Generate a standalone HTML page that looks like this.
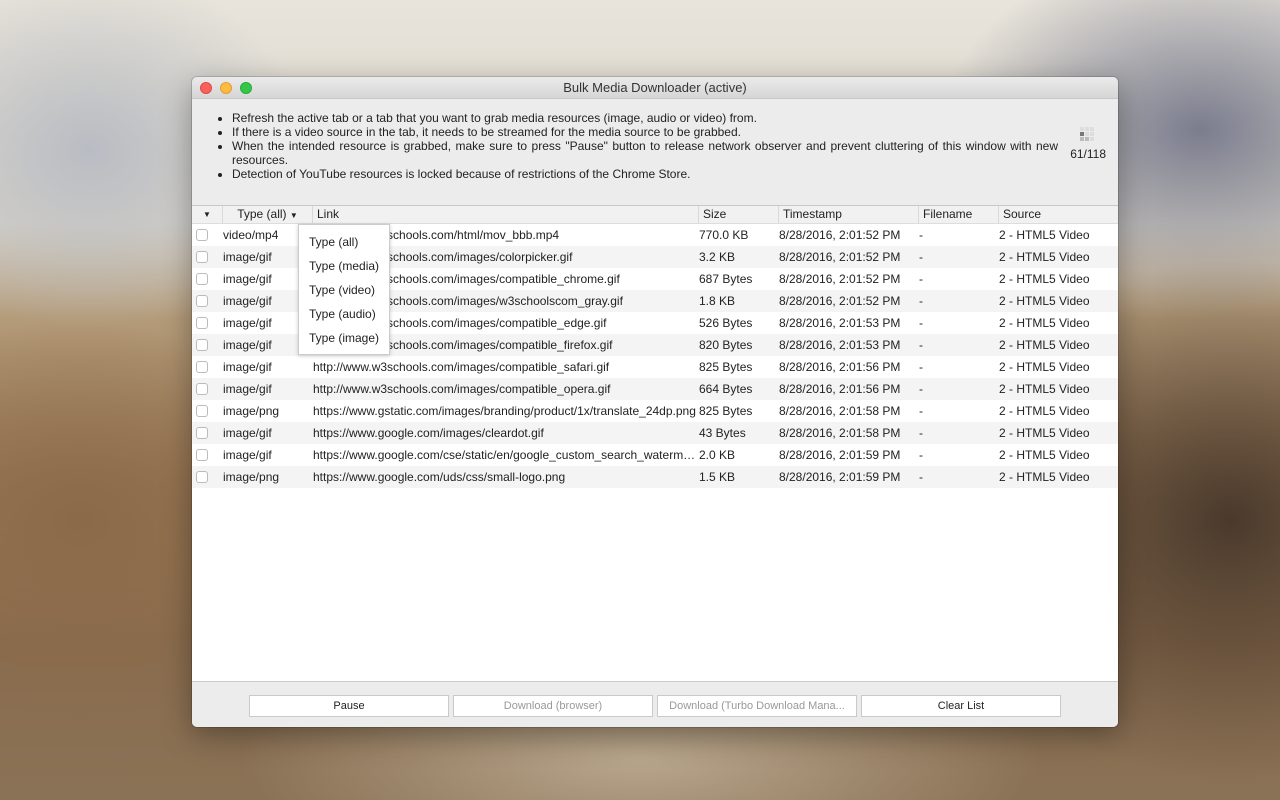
<!DOCTYPE html>
<html><head><meta charset="utf-8"><style>
*{margin:0;padding:0;box-sizing:border-box}
body{width:1280px;height:800px;overflow:hidden;position:relative;font-family:"Liberation Sans",Arial,sans-serif;font-size:12px;color:#222;
background:
radial-gradient(ellipse 260px 180px at 1200px 130px,#7b7d8e 0%,rgba(123,125,142,0) 100%),
radial-gradient(ellipse 300px 260px at 1230px 520px,#4a3a2c 0%,rgba(74,58,44,0) 100%),
radial-gradient(ellipse 260px 200px at 80px 520px,#8a6a48 0%,rgba(138,106,72,0) 100%),
radial-gradient(ellipse 220px 180px at 90px 150px,#b9bcc3 0%,rgba(185,188,195,0) 100%),
radial-gradient(ellipse 400px 120px at 640px 760px,#b8a68c 0%,rgba(184,166,140,0) 100%),
linear-gradient(180deg,#e8e4db 0%,#d9d4c8 28%,#b39a78 40%,#9c7a58 60%,#8a6c4e 80%,#8a7256 100%);}
.win{position:absolute;left:192px;top:77px;width:926px;height:650px;background:#ececec;border-radius:5px;overflow:hidden;box-shadow:0 8px 30px rgba(0,0,0,.35),0 0 0 1px rgba(0,0,0,.15)}
.title{height:22px;background:linear-gradient(#ebebeb,#d6d6d6);border-bottom:1px solid #c8c8c8;text-align:center;line-height:22px;font-size:13px;color:#333}
.dot{position:absolute;top:5px;width:12px;height:12px;border-radius:50%}
.info{position:absolute;left:0;top:23px;width:926px;height:105px}
.info ul{position:absolute;left:40px;top:11px;width:826px;line-height:14px;text-align:justify}
.cnt{position:absolute;right:12px;top:47px;font-size:12px}
.grid{position:absolute;left:888px;top:27px}
.grid i{position:absolute;width:4px;height:4px;background:#ddd}
.table{position:absolute;left:0;top:128px;width:926px;height:476px;background:#fff;border-top:1px solid #c8c8c8}
.hdr{height:18px;background:#f1f1f1;border-bottom:1px solid #ddd;position:relative}
.hdr span{position:absolute;top:0;line-height:17px;border-left:1px solid #d8d8d8;padding-left:4px;height:17px}
.row{height:22px;position:relative;line-height:23px}
.row:nth-child(even){background:#f4f4f4}
.row span{position:absolute;top:0;height:22px;white-space:nowrap;overflow:hidden}
.cb{position:absolute;left:4px;top:5px;width:12px;height:12px;border:1px solid #bbb;border-radius:3px;background:#fff}
.menu{position:absolute;left:298px;top:224px;width:92px;height:131px;background:#fff;border:1px solid #ccc;box-shadow:0 1px 4px rgba(0,0,0,.2)}
.menu div{position:absolute;left:10px;font-size:12px}
.foot{position:absolute;left:0;top:604px;width:926px;height:46px;border-top:1px solid #ccc;background:#ececec}
.btn{position:absolute;top:13px;width:200px;height:22px;background:#fff;border:1px solid #c9c9c9;text-align:center;line-height:20px;font-size:11px}
.dis{color:#999}
</style></head><body>
<div class="win">
 <div class="title">Bulk Media Downloader (active)</div>
 <div class="dot" style="left:8px;background:#fc605c;border:1px solid #df4744"></div>
 <div class="dot" style="left:28px;background:#fdbc40;border:1px solid #de9f34"></div>
 <div class="dot" style="left:48px;background:#34c84a;border:1px solid #27aa35"></div>
 <div class="info">
  <ul>
   <li>Refresh the active tab or a tab that you want to grab media resources (image, audio or video) from.</li>
   <li>If there is a video source in the tab, it needs to be streamed for the media source to be grabbed.</li>
   <li>When the intended resource is grabbed, make sure to press "Pause" button to release network observer and prevent cluttering of this window with new resources.</li>
   <li>Detection of YouTube resources is locked because of restrictions of the Chrome Store.</li>
  </ul>
  <div class="grid"><i style="left:0;top:0"></i><i style="left:5px;top:0"></i><i style="left:10px;top:0"></i><i style="left:0;top:5px;background:#777"></i><i style="left:5px;top:5px"></i><i style="left:10px;top:5px"></i><i style="left:0;top:10px;background:#bbb"></i><i style="left:5px;top:10px;background:#bbb"></i><i style="left:10px;top:10px"></i></div>
  <div class="cnt">61/118</div>
 </div>
 <div class="table">
  <div class="hdr">
   <span style="left:0;border:none;width:30px;text-align:center;padding:0;font-size:8px">&#9660;</span>
   <span style="left:30px;width:90px;text-align:center;padding:0">Type (all) <small style="font-size:8px">&#9660;</small></span>
   <span style="left:120px">Link</span>
   <span style="left:506px">Size</span>
   <span style="left:586px">Timestamp</span>
   <span style="left:726px">Filename</span>
   <span style="left:806px">Source</span>
  </div>
  <div id="rows"></div>
 </div>
 <div class="foot">
  <div class="btn" style="left:57px">Pause</div>
  <div class="btn dis" style="left:261px">Download (browser)</div>
  <div class="btn dis" style="left:465px">Download (Turbo Download Mana...</div>
  <div class="btn" style="left:669px">Clear List</div>
 </div>
</div>
<div class="menu">
 <div style="top:10px">Type (all)</div>
 <div style="top:34px">Type (media)</div>
 <div style="top:58px">Type (video)</div>
 <div style="top:82px">Type (audio)</div>
 <div style="top:106px">Type (image)</div>
</div>
<script>
var d=[["video/mp4","http://www.w3schools.com/html/mov_bbb.mp4","770.0 KB","2:01:52"],
["image/gif","http://www.w3schools.com/images/colorpicker.gif","3.2 KB","2:01:52"],
["image/gif","http://www.w3schools.com/images/compatible_chrome.gif","687 Bytes","2:01:52"],
["image/gif","http://www.w3schools.com/images/w3schoolscom_gray.gif","1.8 KB","2:01:52"],
["image/gif","http://www.w3schools.com/images/compatible_edge.gif","526 Bytes","2:01:53"],
["image/gif","http://www.w3schools.com/images/compatible_firefox.gif","820 Bytes","2:01:53"],
["image/gif","http://www.w3schools.com/images/compatible_safari.gif","825 Bytes","2:01:56"],
["image/gif","http://www.w3schools.com/images/compatible_opera.gif","664 Bytes","2:01:56"],
["image/png","https://www.gstatic.com/images/branding/product/1x/translate_24dp.png","825 Bytes","2:01:58"],
["image/gif","https://www.google.com/images/cleardot.gif","43 Bytes","2:01:58"],
["image/gif","https://www.google.com/cse/static/en/google_custom_search_waterm\u2026","2.0 KB","2:01:59"],
["image/png","https://www.google.com/uds/css/small-logo.png","1.5 KB","2:01:59"]];
var h="";d.forEach(function(r){h+='<div class="row"><div class="cb"></div><span style="left:31px">'+r[0]+'</span><span style="left:121px;width:383px">'+r[1]+'</span><span style="left:507px">'+r[2]+'</span><span style="left:587px">8/28/2016, '+r[3]+' PM</span><span style="left:727px">-</span><span style="left:807px">2 - HTML5 Video</span></div>';});
document.getElementById("rows").innerHTML=h;
</script>
</body></html>
